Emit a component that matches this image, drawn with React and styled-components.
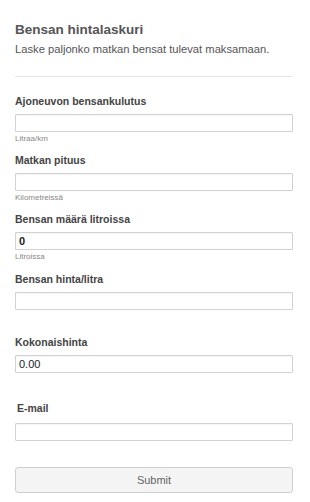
import React from 'react';
import styled, { createGlobalStyle } from 'styled-components';

const GlobalStyle = createGlobalStyle`
    body{
        margin:0;
        background:#fff;
        font-family:"Liberation Sans", Arial, sans-serif;
    }
`;

const fields = [
    { label: 'Ajoneuvon bensankulutus', sub: 'Litraa/km', after: 9 },
    { label: 'Matkan pituus', sub: 'Kilometreissä', after: 9 },
    { label: 'Bensan määrä litroissa', sub: 'Litroissa', value: '0', bold: true, after: 10 },
    { label: 'Bensan hinta/litra', after: 25 },
    { label: 'Kokonaishinta', value: '0.00', after: 28 },
    { label: 'E-mail', indent: true, gap: 8, after: 26 },
];

const App = () => {
    return (
        <>
        <GlobalStyle />
        <FormStyled>
            <HeaderStyled>
                <h1>Bensan hintalaskuri</h1>
                <p>Laske paljonko matkan bensat tulevat maksamaan.</p>
            </HeaderStyled>

            {fields.map((f) => (
                <FieldStyled key={f.label} $after={f.after} $gap={f.gap} $indent={f.indent}>
                    <label>{f.label}</label>
                    <Input defaultValue={f.value || ''} $bold={f.bold} />
                    {f.sub && <span className="sub">{f.sub}</span>}
                </FieldStyled>
            ))}

            <SubmitButton type="button">Submit</SubmitButton>
        </FormStyled>
        </>
    )
}

const FormStyled = styled.form`
    display:flex;
    flex-direction:column;
    width:278px;
    padding:0 17px 0 15px;
`;

const HeaderStyled = styled.div`
    padding:21px 0 19px 0;
    margin-bottom:17px;
    border-bottom:1px solid #e6e6e6;
    color:#555;

    h1{
        margin:0;
        font-size:13.5px;
        line-height:17px;
        font-weight:bold;
    }

    p{
        margin:3px 0 0 0;
        font-size:11.2px;
        line-height:16px;
        white-space:nowrap;
    }
`;

const FieldStyled = styled.div`
    display:flex;
    flex-direction:column;
    margin-bottom:${p => p.$after}px;

    label{
        font-size:10.5px;
        line-height:14px;
        font-weight:bold;
        color:#444;
        margin-bottom:${p => p.$gap || 6}px;
        padding-left:${p => (p.$indent ? 2 : 0)}px;
    }

    .sub{
        margin-top:2px;
        font-size:8px;
        line-height:10px;
        color:#888;
    }
`;

const Input = styled.input`
    box-sizing:border-box;
    width:100%;
    height:18px;
    margin:0;
    padding:0 3px;
    border:1px solid #d2d2d2;
    border-radius:1px;
    box-shadow:inset 0 1px 1px rgba(0,0,0,0.04);
    font-family:"Liberation Sans", Arial, sans-serif;
    font-size:11px;
    font-weight:${p => (p.$bold ? 'bold' : 'normal')};
    color:#222;
    background:#fff;
    outline:none;
`;

const SubmitButton = styled.button`
    box-sizing:border-box;
    width:100%;
    height:26px;
    background:#f4f4f4;
    border:1px solid #cfcfcf;
    border-radius:3px;
    font-family:"Liberation Sans", Arial, sans-serif;
    font-size:11px;
    color:#666;
    cursor:pointer;
`;

export default App;
